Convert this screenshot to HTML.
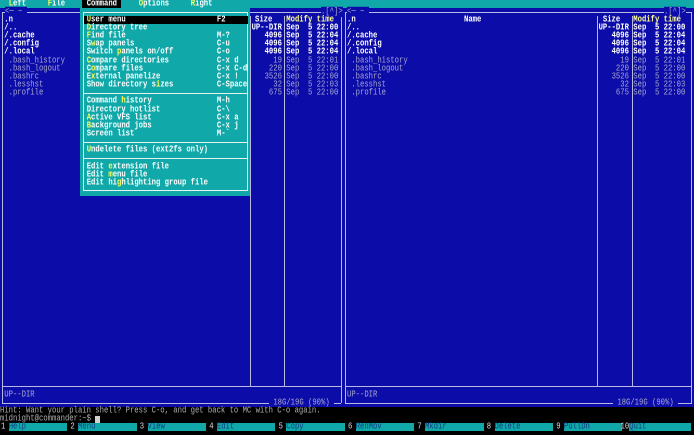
<!DOCTYPE html>
<html><head><meta charset="utf-8"><style>
*{margin:0;padding:0}
body{width:694px;height:434px;overflow:hidden;background:#0c0ca8;position:relative;font-family:"Liberation Mono","DejaVu Sans Mono",monospace}
.a{position:absolute}
.t{position:absolute;white-space:pre;font-size:7.23px;line-height:8.146px;height:8.146px;font-weight:bold;color:#fff;transform:scaleY(1.3);transform-origin:50% 50%}
.d{color:#a8a8d0;font-weight:normal}
.y{color:#ffff55}
.h{color:#ffff90}
.hl{position:absolute;height:1px;background:#b8b8e0}
.vl{position:absolute;width:1px;background:#b8b8e0}
.w{background:#e8f0f0}
.fk{position:absolute;top:423.4px;height:8px;background:#10a8a8}
.fl{color:#0c3c80;font-weight:normal}
</style></head><body>
<div class="a" style="left:0;top:0;width:694px;height:8px;background:#10a8a8"></div>
<div class="t" style="left:8.7px;top:-0.4px"><span class="y">L</span>eft</div>
<div class="t" style="left:47.7px;top:-0.4px"><span class="y">F</span>ile</div>
<div class="a" style="left:82.4px;top:0;width:39px;height:8px;background:#000"></div>
<div class="t" style="left:86.7px;top:-0.4px">Command</div>
<div class="t" style="left:138.8px;top:-0.4px"><span class="y">O</span>ptions</div>
<div class="t" style="left:190.8px;top:-0.4px"><span class="y">R</span>ight</div>

<div class="hl" style="left:2px;top:11.5px;width:339px"></div>
<div class="hl" style="left:2px;top:402.5px;width:339px"></div>
<div class="hl" style="left:2px;top:386.3px;width:339px"></div>
<div class="vl" style="left:2px;top:11.5px;height:391px"></div>
<div class="vl" style="left:340.5px;top:11.5px;height:391px"></div>
<div class="vl" style="left:250px;top:16px;height:370px"></div>
<div class="vl" style="left:284px;top:16px;height:370px"></div>
<div class="hl" style="left:344.5px;top:11.5px;width:347px"></div>
<div class="hl" style="left:344.5px;top:402.5px;width:347px"></div>
<div class="hl" style="left:344.5px;top:386.3px;width:347px"></div>
<div class="vl" style="left:344.5px;top:11.5px;height:391px"></div>
<div class="vl" style="left:691px;top:11.5px;height:391px"></div>
<div class="vl" style="left:597px;top:16px;height:370px"></div>
<div class="vl" style="left:631.5px;top:16px;height:370px"></div>

<div class="t d" style="left:5px;top:7.75px;background:#0c0ca8">&lt;─ ~ </div>
<div class="t d" style="left:321px;top:7.75px;background:#0c0ca8">.[^]&gt;</div>
<div class="t d" style="left:347px;top:7.75px;background:#0c0ca8">&lt;─ ~ </div>
<div class="t d" style="left:664px;top:7.75px;background:#0c0ca8">.[^]&gt;</div>

<div class="t" style="left:4.3px;top:15.9px">.n</div>
<div class="t" style="left:255px;top:15.9px">Size</div>
<div class="t h" style="left:286.3px;top:15.9px">Modify time</div>
<div class="t" style="left:4.3px;top:24.04px">/..</div>
<div class="t" style="left:4.3px;top:32.18px">/.cache</div>
<div class="t" style="left:4.3px;top:40.33px">/.config</div>
<div class="t" style="left:4.3px;top:48.48px">/.local</div>
<div class="t d" style="left:4.3px;top:56.6px"> .bash_history</div>
<div class="t d" style="left:4.3px;top:64.8px"> .bash_logout</div>
<div class="t d" style="left:4.3px;top:72.9px"> .bashrc</div>
<div class="t d" style="left:4.3px;top:81.1px"> .lesshst</div>
<div class="t d" style="left:4.3px;top:89.2px"> .profile</div>
<div class="t" style="left:251.6px;top:24.04px">UP--DIR</div>
<div class="t" style="left:251.6px;top:32.18px">   4096</div>
<div class="t" style="left:251.6px;top:40.33px">   4096</div>
<div class="t" style="left:251.6px;top:48.48px">   4096</div>
<div class="t d" style="left:251.6px;top:56.6px">     19</div>
<div class="t d" style="left:251.6px;top:64.8px">    220</div>
<div class="t d" style="left:251.6px;top:72.9px">   3526</div>
<div class="t d" style="left:251.6px;top:81.1px">     32</div>
<div class="t d" style="left:251.6px;top:89.2px">    675</div>
<div class="t" style="left:286.3px;top:24.04px">Sep  5 22:00</div>
<div class="t" style="left:286.3px;top:32.18px">Sep  5 22:04</div>
<div class="t" style="left:286.3px;top:40.33px">Sep  5 22:04</div>
<div class="t" style="left:286.3px;top:48.48px">Sep  5 22:04</div>
<div class="t d" style="left:286.3px;top:56.6px">Sep  5 22:01</div>
<div class="t d" style="left:286.3px;top:64.8px">Sep  5 22:00</div>
<div class="t d" style="left:286.3px;top:72.9px">Sep  5 22:00</div>
<div class="t d" style="left:286.3px;top:81.1px">Sep  5 22:03</div>
<div class="t d" style="left:286.3px;top:89.2px">Sep  5 22:00</div>
<div class="t d" style="left:4.3px;top:390.6px">UP--DIR</div>
<div class="t d" style="left:269px;top:398.8px;background:#0c0ca8"> 18G/19G (90%) </div>

<div class="t" style="left:347px;top:15.9px">.n</div>
<div class="t" style="left:464px;top:15.9px">Name</div>
<div class="t" style="left:602.9px;top:15.9px">Size</div>
<div class="t h" style="left:633.3px;top:15.9px">Modify time</div>
<div class="t" style="left:347px;top:24.04px">/..</div>
<div class="t" style="left:347px;top:32.18px">/.cache</div>
<div class="t" style="left:347px;top:40.33px">/.config</div>
<div class="t" style="left:347px;top:48.48px">/.local</div>
<div class="t d" style="left:347px;top:56.6px"> .bash_history</div>
<div class="t d" style="left:347px;top:64.8px"> .bash_logout</div>
<div class="t d" style="left:347px;top:72.9px"> .bashrc</div>
<div class="t d" style="left:347px;top:81.1px"> .lesshst</div>
<div class="t d" style="left:347px;top:89.2px"> .profile</div>
<div class="t" style="left:598.6px;top:24.04px">UP--DIR</div>
<div class="t" style="left:598.6px;top:32.18px">   4096</div>
<div class="t" style="left:598.6px;top:40.33px">   4096</div>
<div class="t" style="left:598.6px;top:48.48px">   4096</div>
<div class="t d" style="left:598.6px;top:56.6px">     19</div>
<div class="t d" style="left:598.6px;top:64.8px">    220</div>
<div class="t d" style="left:598.6px;top:72.9px">   3526</div>
<div class="t d" style="left:598.6px;top:81.1px">     32</div>
<div class="t d" style="left:598.6px;top:89.2px">    675</div>
<div class="t" style="left:633.3px;top:24.04px">Sep  5 22:00</div>
<div class="t" style="left:633.3px;top:32.18px">Sep  5 22:04</div>
<div class="t" style="left:633.3px;top:40.33px">Sep  5 22:04</div>
<div class="t" style="left:633.3px;top:48.48px">Sep  5 22:04</div>
<div class="t d" style="left:633.3px;top:56.6px">Sep  5 22:01</div>
<div class="t d" style="left:633.3px;top:64.8px">Sep  5 22:00</div>
<div class="t d" style="left:633.3px;top:72.9px">Sep  5 22:00</div>
<div class="t d" style="left:633.3px;top:81.1px">Sep  5 22:03</div>
<div class="t d" style="left:633.3px;top:89.2px">Sep  5 22:00</div>
<div class="t d" style="left:347px;top:390.6px">UP--DIR</div>
<div class="t d" style="left:613px;top:398.8px;background:#0c0ca8"> 18G/19G (90%) </div>

<div class="a" style="left:80px;top:8px;width:170px;height:187.5px;background:#10a8a8"></div>
<div class="a" style="left:82.5px;top:11.5px;width:165px;height:179.5px;border:1px solid #e8f4f4;box-sizing:border-box"></div>
<div class="a w" style="left:82.5px;top:93px;width:165.5px;height:1px"></div>
<div class="a w" style="left:82.5px;top:142px;width:165.5px;height:1px"></div>
<div class="a w" style="left:82.5px;top:158.2px;width:165.5px;height:1px"></div>
<div class="a" style="left:83.5px;top:16px;width:164px;height:8px;background:#000"></div>
<div class="t" style="left:86.7px;top:15.9px"><span class="y">U</span>ser menu</div>
<div class="t" style="left:216.9px;top:15.9px">F2</div>
<div class="t" style="left:86.7px;top:24.04px"><span class="y">D</span>irectory tree</div>
<div class="t" style="left:86.7px;top:32.18px"><span class="y">F</span>ind file</div>
<div class="t" style="left:216.9px;top:32.18px">M-?</div>
<div class="t" style="left:86.7px;top:40.33px">S<span class="y">w</span>ap panels</div>
<div class="t" style="left:216.9px;top:40.33px">C-u</div>
<div class="t" style="left:86.7px;top:48.48px">Switch <span class="y">p</span>anels on/off</div>
<div class="t" style="left:216.9px;top:48.48px">C-o</div>
<div class="t" style="left:86.7px;top:56.6px"><span class="y">C</span>ompare directories</div>
<div class="t" style="left:216.9px;top:56.6px">C-x d</div>
<div class="t" style="left:86.7px;top:64.8px">C<span class="y">o</span>mpare files</div>
<div class="t" style="left:216.9px;top:64.8px">C-x C-d</div>
<div class="t" style="left:86.7px;top:72.9px">E<span class="y">x</span>ternal panelize</div>
<div class="t" style="left:216.9px;top:72.9px">C-x !</div>
<div class="t" style="left:86.7px;top:81.1px">Show directory s<span class="y">i</span>zes</div>
<div class="t" style="left:216.9px;top:81.1px">C-Space</div>
<div class="t" style="left:86.7px;top:97.35px">Command <span class="y">h</span>istory</div>
<div class="t" style="left:216.9px;top:97.35px">M-h</div>
<div class="t" style="left:86.7px;top:105.5px">Directory hotlist</div>
<div class="t" style="left:216.9px;top:105.5px">C-\</div>
<div class="t" style="left:86.7px;top:113.6px"><span class="y">A</span>ctive VFS list</div>
<div class="t" style="left:216.9px;top:113.6px">C-x a</div>
<div class="t" style="left:86.7px;top:121.8px"><span class="y">B</span>ackground jobs</div>
<div class="t" style="left:216.9px;top:121.8px">C-x j</div>
<div class="t" style="left:86.7px;top:129.9px">Screen list</div>
<div class="t" style="left:216.9px;top:129.9px">M-`</div>
<div class="t" style="left:86.7px;top:146.2px"><span class="y">U</span>ndelete files (ext2fs only)</div>
<div class="t" style="left:86.7px;top:162.5px">Edit <span class="y">e</span>xtension file</div>
<div class="t" style="left:86.7px;top:170.7px">Edit <span class="y">m</span>enu file</div>
<div class="t" style="left:86.7px;top:178.8px">Edit hi<span class="y">g</span>hlighting group file</div>

<div class="a" style="left:0;top:406.9px;width:694px;height:28px;background:#000"></div>
<div class="t d" style="left:0;top:406.8px;color:#b0b0b0">Hint: Want your plain shell? Press C-o, and get back to MC with C-o again.</div>
<div class="t d" style="left:0;top:414.9px;color:#b0b0b0">midnight@commander:~$ </div>
<div class="a" style="left:95.4px;top:415.5px;width:4.3px;height:7.5px;background:#d0d0d0"></div>

<div class="fk" style="left:8.7px;width:58.5px"></div>
<div class="fk" style="left:78.1px;width:58.5px"></div>
<div class="fk" style="left:147.5px;width:58.5px"></div>
<div class="fk" style="left:216.9px;width:58.5px"></div>
<div class="fk" style="left:286.3px;width:58.5px"></div>
<div class="fk" style="left:355.7px;width:58.5px"></div>
<div class="fk" style="left:425.1px;width:58.5px"></div>
<div class="fk" style="left:494.5px;width:58.5px"></div>
<div class="fk" style="left:563.9px;width:58.5px"></div>
<div class="fk" style="left:629.2px;width:62px"></div>
<div class="t" style="left:1px;top:423.1px;font-weight:normal;color:#ddd">1</div><div class="t fl" style="left:8.7px;top:423.1px">Help</div>
<div class="t" style="left:70.4px;top:423.1px;font-weight:normal;color:#ddd">2</div><div class="t fl" style="left:78.1px;top:423.1px">Menu</div>
<div class="t" style="left:139.8px;top:423.1px;font-weight:normal;color:#ddd">3</div><div class="t fl" style="left:147.5px;top:423.1px">View</div>
<div class="t" style="left:209.2px;top:423.1px;font-weight:normal;color:#ddd">4</div><div class="t fl" style="left:216.9px;top:423.1px">Edit</div>
<div class="t" style="left:278.6px;top:423.1px;font-weight:normal;color:#ddd">5</div><div class="t fl" style="left:286.3px;top:423.1px">Copy</div>
<div class="t" style="left:348px;top:423.1px;font-weight:normal;color:#ddd">6</div><div class="t fl" style="left:355.7px;top:423.1px">RenMov</div>
<div class="t" style="left:417.4px;top:423.1px;font-weight:normal;color:#ddd">7</div><div class="t fl" style="left:425.1px;top:423.1px">Mkdir</div>
<div class="t" style="left:486.8px;top:423.1px;font-weight:normal;color:#ddd">8</div><div class="t fl" style="left:494.5px;top:423.1px">Delete</div>
<div class="t" style="left:556.2px;top:423.1px;font-weight:normal;color:#ddd">9</div><div class="t fl" style="left:563.9px;top:423.1px">PullDn</div>
<div class="t" style="left:620.5px;top:423.1px;font-weight:normal;color:#ddd">10</div><div class="t fl" style="left:629.2px;top:423.1px">Quit</div>
</body></html>
